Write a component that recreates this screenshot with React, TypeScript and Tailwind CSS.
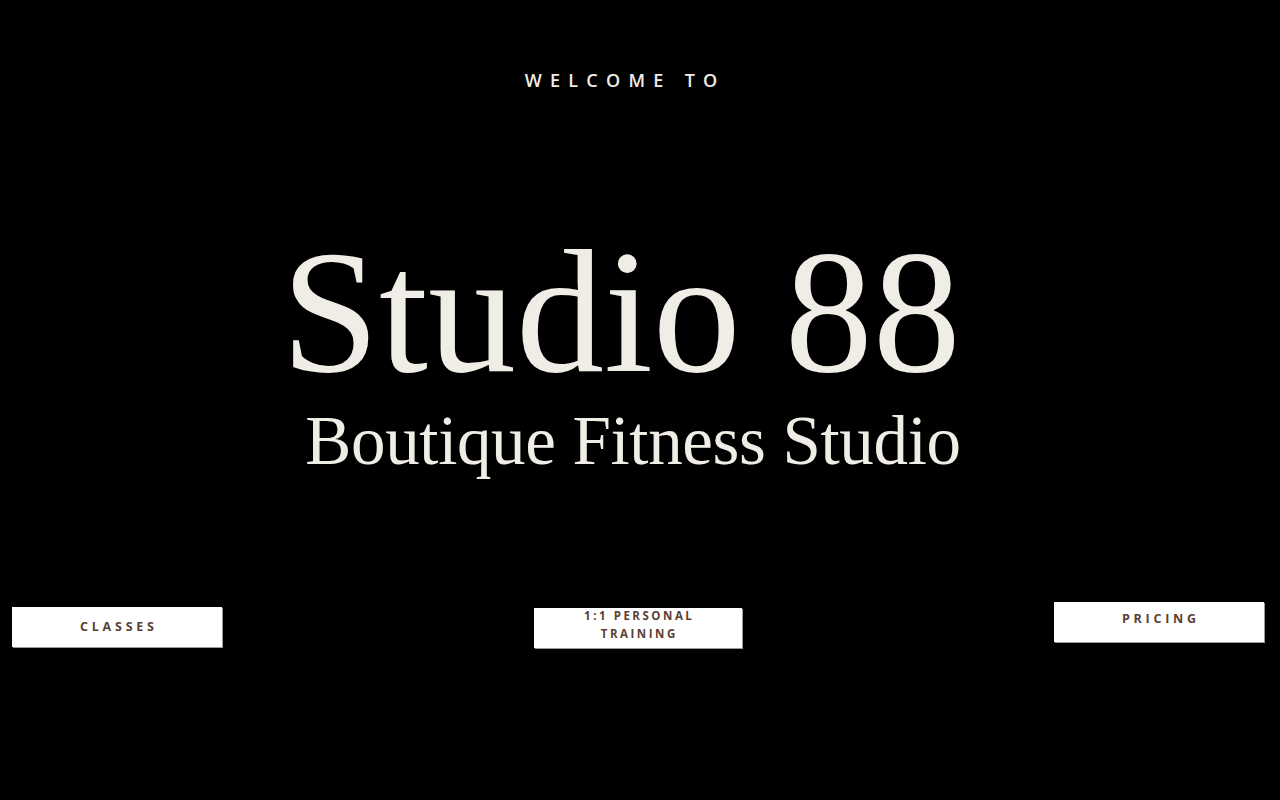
import React from 'react';

const buttons = [
  { label: 'CLASSES', cls: 'mt-[5px] w-[210px]', text: 'text-[12.5px] tracking-[0.3em] pl-[0.3em]' },
  { label: '1:1 PERSONAL TRAINING', cls: 'mt-[6px] w-[208px] pb-[6px]', text: 'text-[11.5px] tracking-[0.22em] pl-[0.22em]' },
  { label: 'PRICING', cls: 'mt-0 w-[210px] pb-[6px]', text: 'text-[12.5px] tracking-[0.3em] pl-[0.3em]' },
];

export default function App() {
  return (
    <div className="min-h-[800px] w-full bg-black text-[#f0ede7] flex flex-col">
      <div className="flex flex-col items-center pr-[38px]">
        <p className="pt-[70px] pl-[0.46em] text-center font-['Open_Sans',sans-serif] text-[18px] font-semibold tracking-[0.46em] leading-[20px]">
          WELCOME TO
        </p>

        <h1 className="mt-[132px] text-center font-['Liberation_Serif',serif] text-[176px] leading-[180px]">
          Studio 88
        </h1>
        <h2 className="mt-[-1px] pl-[24px] text-center font-['Liberation_Serif',serif] text-[69px] leading-[80px] tracking-[-0.005em]">
          Boutique Fitness Studio
        </h2>
      </div>

      <div className="mt-[121px] flex items-start justify-between pl-[12px] pr-[16px]">
        {buttons.map((b) => (
          <div
            key={b.label}
            className={`${b.cls} h-[40px] bg-white shadow-[1px_1px_0_#9a9a9a] flex items-center justify-center px-[36px]`}
          >
            <span className={`${b.text} text-center font-['Open_Sans',sans-serif] font-bold leading-[18px] text-[#5b3f33]`}>
              {b.label}
            </span>
          </div>
        ))}
      </div>
    </div>
  );
}
